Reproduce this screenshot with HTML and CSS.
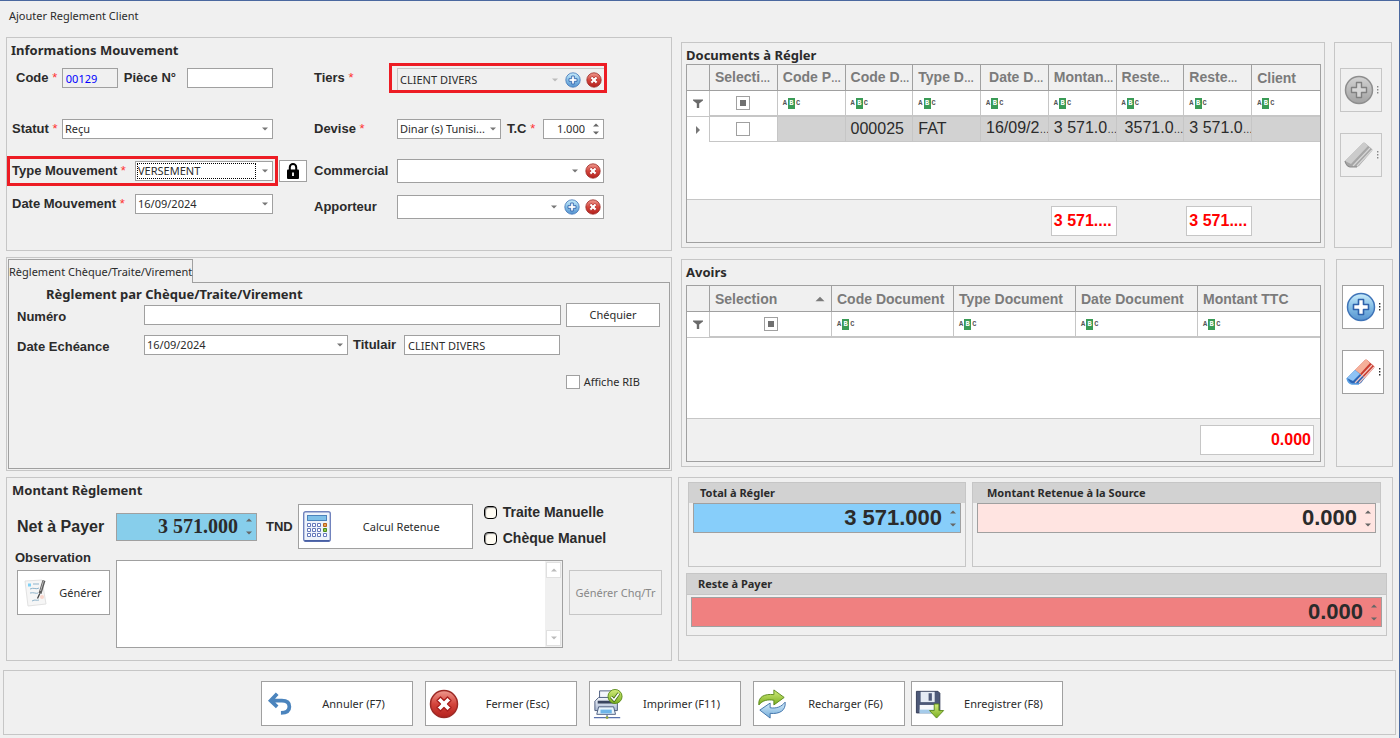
FILE: index.html
```html
<!DOCTYPE html>
<html lang="fr">
<head>
<meta charset="utf-8">
<title>Ajouter Reglement Client</title>
<link rel="stylesheet" href="styles.css">
</head>
<body>
<svg class="defs" aria-hidden="true">
  <defs>
    <linearGradient id="gBlue" x1="0" y1="0" x2="0" y2="1"><stop offset="0" stop-color="#c9ecfb"/><stop offset=".5" stop-color="#86bfe6"/><stop offset="1" stop-color="#5592cf"/></linearGradient>
    <linearGradient id="gRed" x1="0" y1="0" x2="0" y2="1"><stop offset="0" stop-color="#ef9a90"/><stop offset=".5" stop-color="#d4453c"/><stop offset="1" stop-color="#b3201c"/></linearGradient>
    <linearGradient id="gGrey" x1="0" y1="0" x2="0" y2="1"><stop offset="0" stop-color="#d2d2d2"/><stop offset="1" stop-color="#a2a2a2"/></linearGradient>
    <linearGradient id="gGreen" x1="0" y1="0" x2="0" y2="1"><stop offset="0" stop-color="#d3ec7c"/><stop offset="1" stop-color="#79ae1f"/></linearGradient>
    <linearGradient id="gSky" x1="0" y1="0" x2="0" y2="1"><stop offset="0" stop-color="#d6edfb"/><stop offset="1" stop-color="#74acd9"/></linearGradient>
    <linearGradient id="gSteel" x1="0" y1="0" x2="0" y2="1"><stop offset="0" stop-color="#f4f7fc"/><stop offset="1" stop-color="#a9b8d2"/></linearGradient>
    <symbol id="plus" viewBox="0 0 30 30"><circle cx="15" cy="15" r="13.5" fill="url(#gBlue)" stroke="#3f74b8" stroke-width="1.5"/><path d="M12.5 7.500h5v5h5v5h-5v5h-5v-5h-5v-5h5z" fill="#fff" stroke="#2f62ab" stroke-width="1.600" stroke-linejoin="round"/></symbol>
    <symbol id="plusGrey" viewBox="0 0 30 30"><circle cx="15" cy="15" r="13.500" fill="url(#gGrey)" stroke="#8e8e8e" stroke-width="1.500"/><path d="M12.500 7.500h5v5h5v5h-5v5h-5v-5h-5v-5h5z" fill="#d6d6d6" stroke="#808080" stroke-width="1.400" stroke-linejoin="round"/></symbol>
    <symbol id="cross" viewBox="0 0 30 30"><circle cx="15" cy="15" r="13.500" fill="url(#gRed)" stroke="#9c2a26" stroke-width="1.500"/><path d="M11.500 8l3.500 3.500L18.500 8l3.500 3.500-3.500 3.500 3.500 3.500-3.500 3.500-3.500-3.500-3.500 3.500L8 18.500l3.500-3.500L8 11.500z" fill="#fff" stroke="#a81d1b" stroke-width="1.300" stroke-linejoin="round"/></symbol>
    <symbol id="down" viewBox="0 0 6 4"><path d="M0 .5h6L3 3.500z" fill="currentColor"/></symbol>
    <symbol id="up" viewBox="0 0 6 4"><path d="M0 3.500h6L3 .5z" fill="currentColor"/></symbol>
    <symbol id="funnel" viewBox="0 0 10 9"><path d="M0 .5h10v1L6.200 4.500V9H3.800V4.500L0 1.500z" fill="#6a6a6a"/></symbol>
    <symbol id="dots" viewBox="0 0 2 8"><path d="M0 0h1.400v1.400H0zM0 3h1.400v1.400H0zM0 6h1.400v1.400H0z" fill="currentColor"/></symbol>
  </defs>
</svg>

<div class="window">
  <header class="caption">Ajouter Reglement Client</header>

  <form class="workspace">
    <div class="side-left">

      <section class="panel movement">
        <h2>Informations Mouvement</h2>
        <div class="movement-cols">
          <div class="rows rows-a">
            <div class="row inset">
              <label class="grow code-label" for="code">Code <b>*</b></label>
              <input class="box code" id="code" value="00129" readonly>
              <label class="piece-label" for="piece">Pièce N°</label>
              <input class="box piece" id="piece">
            </div>
            <div class="row inset">
              <label class="grow" for="statut">Statut <b>*</b></label>
              <span class="box combo w-long"><span class="pick"><select id="statut"><option>Reçu</option></select><svg><use href="#down"/></svg></span></span>
            </div>
            <div class="row">
              <div class="marked type-mark">
                <label class="grow" for="type">Type Mouvement <b>*</b></label>
                <span class="box combo w-mid"><span class="pick focused"><select id="type"><option>VERSEMENT</option></select><svg><use href="#down"/></svg></span></span>
              </div>
              <button type="button" class="btn lock" aria-label="Verrouiller"><svg viewBox="0 0 12 16"><path d="M2.800 7V4.200a3.200 3.200 0 0 1 6.400 0V7" fill="none" stroke="#000" stroke-width="2"/><rect y="6.500" width="12" height="9.500" rx="1" fill="#000"/><path d="M6 9.500v3.500" stroke="#fff" stroke-width="1.800"/></svg></button>
            </div>
            <div class="row inset">
              <label class="grow" for="date">Date Mouvement <b>*</b></label>
              <span class="box combo w-mid"><span class="pick"><select id="date"><option>16/09/2024</option></select><svg><use href="#down"/></svg></span></span>
            </div>
          </div>

          <div class="rows rows-b">
            <div class="row">
              <label class="name" for="tiers">Tiers <b>*</b></label>
              <div class="marked tiers-mark">
                <span class="box combo off"><span class="pick"><select id="tiers"><option>CLIENT DIVERS</option></select><svg><use href="#down"/></svg></span><button type="button" class="mini" aria-label="Ajouter un tiers"><svg><use href="#plus"/></svg></button><button type="button" class="mini" aria-label="Effacer le tiers"><svg><use href="#cross"/></svg></button></span>
              </div>
            </div>
            <div class="row">
              <label class="name" for="devise">Devise <b>*</b></label>
              <span class="box combo devise"><span class="pick"><select id="devise"><option>Dinar (s) Tunisi...</option></select><svg><use href="#down"/></svg></span></span>
              <label class="tc" for="tc">T.C <b>*</b></label>
              <span class="box spin rate"><input id="tc" value="1.000"><span class="arrows"><svg><use href="#up"/></svg><svg><use href="#down"/></svg></span></span>
            </div>
            <div class="row">
              <label class="name" for="commercial">Commercial</label>
              <span class="box combo tall"><span class="pick"><select id="commercial"><option></option></select><svg><use href="#down"/></svg></span><button type="button" class="mini" aria-label="Effacer le commercial"><svg><use href="#cross"/></svg></button></span>
            </div>
            <div class="row">
              <label class="name" for="apporteur">Apporteur</label>
              <span class="box combo tall"><span class="pick"><select id="apporteur"><option></option></select><svg><use href="#down"/></svg></span><button type="button" class="mini" aria-label="Ajouter un apporteur"><svg><use href="#plus"/></svg></button><button type="button" class="mini" aria-label="Effacer l'apporteur"><svg><use href="#cross"/></svg></button></span>
            </div>
          </div>
        </div>
      </section>

      <section class="panel cheque">
        <button type="button" class="tab">Règlement Chèque/Traite/Virement</button>
        <div class="tab-page">
          <h2>Règlement par Chèque/Traite/Virement</h2>
          <div class="row">
            <label class="cheque-name" for="numero">Numéro</label>
            <input class="box grow" id="numero">
            <button type="button" class="btn chequier">Chéquier</button>
          </div>
          <div class="row due">
            <label class="cheque-name" for="echeance">Date Echéance</label>
            <span class="box combo grow"><span class="pick"><select id="echeance"><option>16/09/2024</option></select><svg><use href="#down"/></svg></span></span>
            <label class="titulair" for="titulair">Titulair</label>
            <input class="box holder" id="titulair" value="CLIENT DIVERS">
          </div>
          <div class="rib"><input type="checkbox" class="tick" id="rib"><label class="plain" for="rib">Affiche RIB</label></div>
        </div>
      </section>

      <section class="panel amount">
        <h2>Montant Règlement</h2>
        <div class="net-row">
          <label class="net" for="net">Net à Payer</label>
          <span class="box spin net-box"><input id="net" value="3 571.000"><span class="arrows"><svg><use href="#up"/></svg><svg><use href="#down"/></svg></span></span>
          <span class="currency">TND</span>
          <button type="button" class="btn calc">
            <svg viewBox="0 0 28 31"><rect x=".7" y=".7" width="26.600" height="29.600" rx="2" fill="#eef3fb" stroke="#7183bd" stroke-width="1.400"/><path d="M1.500 29.800h25" stroke="#3d559c" stroke-width="1.400"/><rect x="4.500" y="4.500" width="19" height="5" fill="#7fc0e8" stroke="#4c82bb"/><g fill="#fff" stroke="#6478bb"><path d="M4.500 12.500h3v3h-3zM9.500 12.500h3v3h-3zM14.500 12.500h3v3h-3zM4.500 17.500h3v3h-3zM9.500 17.500h3v3h-3zM14.500 17.500h3v3h-3zM4.500 22.500h3v3h-3zM9.500 22.500h3v3h-3zM14.500 22.500h3v3h-3zM20.500 22.500h3v3h-3z"/></g><path d="M20.500 12.500h3v3h-3z" fill="#e8a04c" stroke="#b9621b"/><path d="M20.500 17.500h3v3h-3z" fill="#8cc63f" stroke="#4c8a1c"/></svg>
            <span>Calcul Retenue</span>
          </button>
          <div class="manual">
            <span><input type="checkbox" class="round" id="mt"><label for="mt">Traite Manuelle</label></span>
            <span><input type="checkbox" class="round" id="mc"><label for="mc">Chèque Manuel</label></span>
          </div>
        </div>
        <div class="note-row">
          <div class="note-left">
            <label for="obs">Observation</label>
            <button type="button" class="btn generate">
              <svg viewBox="0 0 26 30"><path d="M1 3l17-1 4 24-18 2z" fill="#f6f6f6" stroke="#e2e2e2"/><path d="M4 5.500h3v3H4z" fill="#7fd0f5"/><path d="M9 6l6 0M6 11c4-2 6 1 9-1M6 15c4-1 6 1 8 0M8 23c3-2 5 0 7-1" fill="none" stroke="#8fb4cb"/><circle cx="18" cy="19" r="2" fill="#f9d5cb"/><path d="M20 2.500l-4 13" stroke="#5b5b5b" stroke-width="3"/><path d="M15.800 15.500l-2.300 5" stroke="#444" stroke-width="1.300"/><path d="M19.500 3l-3 10" stroke="#bbb"/></svg>
              <span>Générer</span>
            </button>
          </div>
          <div class="box note"><textarea id="obs"></textarea><span class="track"><button type="button" aria-label="Haut"><svg><use href="#up"/></svg></button><button type="button" aria-label="Bas"><svg><use href="#down"/></svg></button></span></div>
          <button type="button" class="btn gen-chq" disabled>Générer Chq/Tr</button>
        </div>
      </section>
    </div>

    <div class="side-right">
      <div class="grid-row docs-row">
        <section class="panel data">
          <h2>Documents à Régler</h2>
          <table class="sheet docs">
            <colgroup><col class="mark"><col><col><col><col><col><col><col><col><col></colgroup>
            <thead>
              <tr><th></th><th>Selecti<i>…</i></th><th>Code P<i>…</i></th><th>Code D<i>…</i></th><th>Type D<i>…</i></th><th class="pad">Date D<i>…</i></th><th>Montan<i>…</i></th><th>Reste<i>…</i></th><th>Reste<i>…</i></th><th>Client</th></tr>
              <tr class="filter"><td><svg class="funnel"><use href="#funnel"/></svg></td><td class="mid"><input type="checkbox" class="tick some" aria-label="Filtre sélection"></td><td><span class="abc">A<em>B</em>C</span></td><td><span class="abc">A<em>B</em>C</span></td><td><span class="abc">A<em>B</em>C</span></td><td><span class="abc">A<em>B</em>C</span></td><td><span class="abc">A<em>B</em>C</span></td><td><span class="abc">A<em>B</em>C</span></td><td><span class="abc">A<em>B</em>C</span></td><td><span class="abc">A<em>B</em>C</span></td></tr>
            </thead>
            <tbody>
              <tr class="record"><td class="pointer"><svg viewBox="0 0 4 8"><path d="M0 0l4 4-4 4z" fill="#777"/></svg></td><td class="mid select"><input type="checkbox" class="tick" aria-label="Sélectionner 000025"></td><td></td><td>000025</td><td>FAT</td><td>16/09/2<i>…</i></td><td>3 571.0<i>…</i></td><td class="pad">3571.0<i>…</i></td><td>3 571.0<i>…</i></td><td></td></tr>
              <tr class="blank"><td colspan="10"></td></tr>
            </tbody>
            <tfoot><tr><td colspan="6"></td><td><output class="sum">3 571....</output></td><td></td><td><output class="sum">3 571....</output></td><td></td></tr></tfoot>
          </table>
        </section>
        <aside class="panel tools">
          <button type="button" class="btn tool" disabled aria-label="Ajouter un document"><svg class="pic"><use href="#plusGrey"/></svg><svg class="dots"><use href="#dots"/></svg></button>
          <button type="button" class="btn tool" disabled aria-label="Effacer les documents"><svg class="pic" viewBox="0 0 30 30"><path d="M1 21L19 3q1-1 2 0l7 6q1 1 0 2L15 26l-2 1H6q-4-1-5-6z" fill="#a6a6a6"/><path d="M1 21L19 3q1-1 2 0l3 3L7 24z" fill="#cbcbcb"/><path d="M9 26L26 8M13 26L28 10" stroke="#d6d6d6" stroke-width="1.200"/><path d="M1 21q1 5 5 6h7" fill="none" stroke="#8b8b8b" stroke-width="1.200"/></svg><svg class="dots"><use href="#dots"/></svg></button>
        </aside>
      </div>

      <div class="grid-row credits-row">
        <section class="panel data">
          <h2>Avoirs</h2>
          <table class="sheet credits">
            <colgroup><col class="mark"><col><col><col><col><col></colgroup>
            <thead>
              <tr><th></th><th><span class="sorted">Selection<svg><use href="#up"/></svg></span></th><th>Code Document</th><th>Type Document</th><th>Date Document</th><th>Montant TTC</th></tr>
              <tr class="filter"><td><svg class="funnel"><use href="#funnel"/></svg></td><td class="mid"><input type="checkbox" class="tick some" aria-label="Filtre sélection"></td><td><span class="abc">A<em>B</em>C</span></td><td><span class="abc">A<em>B</em>C</span></td><td><span class="abc">A<em>B</em>C</span></td><td><span class="abc">A<em>B</em>C</span></td></tr>
            </thead>
            <tbody><tr class="blank"><td colspan="6"></td></tr></tbody>
            <tfoot><tr><td colspan="5"></td><td><output class="sum">0.000</output></td></tr></tfoot>
          </table>
        </section>
        <aside class="panel tools">
          <button type="button" class="btn tool" aria-label="Ajouter un avoir"><svg class="pic"><use href="#plus"/></svg><svg class="dots"><use href="#dots"/></svg></button>
          <button type="button" class="btn tool" aria-label="Effacer les avoirs"><svg class="pic" viewBox="0 0 30 30"><path d="M9 13L19 3q1-1 2 0l7 6q1 1 0 2l-9 10z" fill="#c93c2f"/><path d="M9 13L19 3q1-1 2 0l3 3-10 11z" fill="#f5b09a"/><path d="M1 21l8-8 10 8-4 5-2 1H6q-4-1-5-6z" fill="#2b65b5"/><path d="M1 21l8-8 5 4-7 7z" fill="#8ec3f5"/><path d="M9 26L26 8M13 26L28 10" stroke="#f3c9c4" stroke-width="1.200"/><path d="M1 21q1 5 5 6h7" fill="none" stroke="#5ba0e4" stroke-width="1.500"/></svg><svg class="dots"><use href="#dots"/></svg></button>
        </aside>
      </div>

      <section class="panel totals">
        <div class="pair">
          <div class="card due-total"><label for="total">Total à Régler</label><span class="box spin big blue"><input id="total" value="3 571.000"><span class="arrows"><svg><use href="#up"/></svg><svg><use href="#down"/></svg></span></span></div>
          <div class="card held"><label for="retenue">Montant Retenue à la Source</label><span class="box spin big pink"><input id="retenue" value="0.000"><span class="arrows"><svg><use href="#up"/></svg><svg><use href="#down"/></svg></span></span></div>
        </div>
        <div class="card rest"><label for="reste">Reste à Payer</label><span class="box spin big coral"><input id="reste" value="0.000"><span class="arrows"><svg><use href="#up"/></svg><svg><use href="#down"/></svg></span></span></div>
      </section>
    </div>
  </form>

  <footer class="panel actions">
    <button type="button" class="btn action"><svg viewBox="0 0 32 32"><path d="M13 5L6 12.500l7 6.500M6.500 12.500H18c7 0 8 4 8 6.500 0 4-3 6.500-9 6.500" fill="none" stroke="#4b84bd" stroke-width="4"/></svg><span>Annuler (F7)</span></button>
    <button type="button" class="btn action"><svg viewBox="0 0 30 30"><use href="#cross"/></svg><span>Fermer (Esc)</span></button>
    <button type="button" class="btn action"><svg viewBox="0 0 32 32"><path d="M7 2h13v11H7z" fill="#f3f6fb" stroke="#4a5a7c"/><path d="M3 12l3-3h17l3 3v11H2V13z" fill="url(#gSteel)" stroke="#4a5a7c"/><path d="M5 12.500h19v3H5z" fill="#39445e"/><path d="M6 19h16l2 8H4z" fill="#e8f4fc" stroke="#4a5a7c"/><path d="M8 22h12v4H8z" fill="#6db5e8"/><path d="M1 30.500h28M15 27v4" stroke="#5972ad" stroke-width="1.300"/><circle cx="15" cy="30.500" r="1.500" fill="#94a63c"/><circle cx="23.500" cy="8" r="7.500" fill="url(#gGreen)" stroke="#5c8d1b"/><path d="M19.500 8.500l3 3.200 5-7" fill="none" stroke="#3b6413" stroke-width="3.400"/><path d="M19.500 8.500l3 3.200 5-7" fill="none" stroke="#fff" stroke-width="1.800"/></svg><span>Imprimer (F11)</span></button>
    <button type="button" class="btn action"><svg viewBox="0 0 32 32"><path d="M2 17C1 8 8 5 18 6V1l11 8-11 8v-5C11 11 6 12 2 17z" fill="url(#gGreen)" stroke="#5b8a1c"/><path d="M30 14c1 9-6 13-16 12v5L3 22.500 14 15v5c7 1 12-1 16-6z" fill="url(#gSky)" stroke="#3f72aa"/></svg><span>Recharger (F6)</span></button>
    <button type="button" class="btn action"><svg viewBox="0 0 32 32"><path d="M1.500 2.500h23l2 2v21h-25z" fill="#4d5978" stroke="#333c56"/><path d="M6 3h15v11H6z" fill="#e5ebf4"/><path d="M14.500 4.500h3.500v8h-3.500z" fill="#4d5978"/><path d="M5 17h18v9H5z" fill="#f7f9fc"/><path d="M5 22h18v4H5z" fill="#a5cbea"/><path d="M20.500 16h5v7h5L23 31l-7.500-8h5z" fill="url(#gGreen)" stroke="#5b8a1c"/></svg><span>Enregistrer (F8)</span></button>
  </footer>
</div>
</body>
</html>
```

FILE: styles.css
```css
* { box-sizing: border-box; }
body {
  margin: 0;
  background: #f0f0f0;
  color: #2b2b2b;
  font: 11px/16px "Noto Sans", "Open Sans", sans-serif;
}
.defs { position: absolute; width: 0; height: 0; }
.window {
  min-height: 100vh;
  padding: 0 3px 3px 3px;
  border-top: 1px solid #4a689f;
  border-right: 1px solid #4a689f;
}
.caption { height: 36px; padding: 7px 6px; font-size: 11px; }
button, input, select, textarea { font: inherit; color: inherit; margin: 0; }
h2 { margin: 0; font: bold 13px/18px "Noto Sans", sans-serif; }
label, .currency { font: bold 13px/18px "Liberation Sans", Arial, sans-serif; white-space: nowrap; }
label b { color: #f33; font-weight: normal; }
.plain { font: 11px/16px "Noto Sans", sans-serif; }
.grow { flex: 1; min-width: 0; }

.workspace {
  display: grid;
  grid-template-columns: 666fr 715fr;
  gap: 6px;
  padding: 0 3px;
}
.side-left { display: flex; flex-direction: column; gap: 6px; }
.side-right { display: flex; flex-direction: column; padding-top: 5px; }
.panel { border: 1px solid #c6c6c6; }

/* shared controls */
.box { height: 20px; border: 1px solid #a0a0a0; border-radius: 0; background: #fff; padding: 0 3px; }
.row { display: flex; align-items: center; }
.combo { display: flex; align-items: center; padding: 0; }
.pick { position: relative; display: flex; flex: 1; height: 100%; min-width: 0; }
.pick select {
  flex: 1; min-width: 0; height: 100%; padding: 0 14px 0 2px;
  appearance: none; border: 0; border-radius: 0; background: transparent; outline: 0;
}
.pick svg { position: absolute; right: 4px; top: calc(50% - 2px); width: 6px; height: 4px; color: #777; pointer-events: none; }
.focused::before { content: ""; position: absolute; inset: 1px 16px 1px 1px; border: 1px dotted #000; }
.mini { width: 16px; height: 16px; margin: 0 2px 0 3px; padding: 0; border: 0; background: none; }
.mini svg { display: block; width: 16px; height: 16px; }
.spin { display: flex; align-items: center; padding: 0 4px; }
.spin input { flex: 1; min-width: 0; height: 100%; padding: 0 8px 0 0; border: 0; background: transparent; text-align: right; outline: 0; }
.arrows { display: flex; flex-direction: column; gap: 4px; color: #666; }
.arrows svg { width: 6px; height: 4px; }
.btn {
  display: flex; align-items: center; justify-content: center;
  padding: 0; border: 1px solid #a0a0a0; border-radius: 0; background: #fff;
}
.btn:disabled { border-color: #c6c6c6; background: #f0f0f0; color: #888; }
.tick {
  appearance: none; flex: none; width: 14px; height: 14px;
  border: 1px solid #a0a0a0; background: #fff; vertical-align: middle;
}
.some { padding: 3px; background: #707070 content-box; box-shadow: inset 0 0 0 3px #fff; }
.marked { display: flex; flex: none; align-items: center; height: 30px; border: 3px solid #ed1c24; }

/* movement details */
.movement { min-height: 214px; padding: 3px 0 0; }
.movement h2 { padding-left: 4px; }
.movement-cols { display: flex; gap: 7px; }
.rows { display: grid; grid-template-rows: 40px 61px 24px 42px; margin-top: -1px; }
.rows-a { width: 300px; }
.inset { padding: 0 34px 0 5px; }
.code-label { padding-left: 4px; }
.code { width: 56px; background: #f0f0f0; color: #00f; }
.piece-label { padding: 0 11px 0 6px; }
.piece { width: 86px; }
.w-long { width: 211px; }
.w-mid { width: 138px; }
.type-mark { width: 271px; padding: 0 2px; }
.lock { width: 28px; height: 22px; margin-left: 1px; }
.lock svg { width: 12px; height: 16px; }
.name { width: 83px; flex: none; }
.rows-b { grid-template-rows: 40px 61px 24px 48px; }
.rows-b .combo { width: 207px; }
.rows-b .tall { height: 24px; }
.rows-b .devise { width: 104px; }
.tc { width: 42px; padding-left: 6px; }
.rate { width: 61px; }
.tiers-mark { width: 218px; margin-left: -8px; padding: 2px 0 0 5px; align-items: stretch; }
.tiers-mark .combo { height: 100%; background: #f0f0f0; border-color: #c6c6c6; border-width: 1px 0 0 1px; }
.off .pick svg { color: #bbb; }

/* cheque tab */
.cheque { display: flex; flex-direction: column; min-height: 214px; padding: 1px; }
.tab {
  position: relative; align-self: flex-start; width: 185px; height: 24px; margin-bottom: -1px; padding: 0;
  border: 1px solid #a0a0a0; border-bottom: 0; background: #f0f0f0; white-space: nowrap;
}
.tab-page { flex: 1; padding: 2px 9px 0 8px; border: 1px solid #a0a0a0; }
.tab-page h2 { padding-left: 29px; }
.cheque-name { width: 127px; flex: none; padding-top: 4px; }
.chequier { width: 94px; height: 24px; margin-left: 5px; }
.due { margin-top: 7px; padding-right: 100px; }
.titulair { width: 56px; padding-left: 5px; }
.holder { width: 156px; }
.rib { display: flex; align-items: center; justify-content: flex-end; gap: 4px; margin-top: 18px; padding-right: 20px; }

/* amount */
.amount { min-height: 184px; padding: 3px 9px 0 5px; }
.net-row { display: flex; align-items: center; margin-top: 4px; padding-left: 5px; }
.net { width: 99px; font-size: 16px; }
.net-box { width: 141px; height: 28px; background: #87ceeb; }
.net-box input { font: bold 20px/26px "Liberation Serif", "Times New Roman", serif; }
.net-box .arrows, .big .arrows { gap: 9px; }
.currency { padding: 0 5px 0 9px; }
.calc { width: 175px; height: 45px; padding-left: 4px; }
.calc svg { width: 28px; height: 31px; }
.calc span { flex: 1; }
.manual { display: flex; flex-direction: column; gap: 8px; margin-left: 11px; padding-bottom: 3px; }
.manual span { display: flex; align-items: center; gap: 6px; }
.manual label { font-size: 14px; }
.round {
  appearance: none; width: 13px; height: 13px; border: 1px solid #000; border-radius: 4px;
  background: #fffcf3; box-shadow: inset 1px 1px 1px #888;
}
.note-row { display: flex; align-items: flex-start; margin-top: 10px; }
.note-left { width: 104px; margin-top: -11px; padding-left: 3px; }
.generate { width: 93px; height: 45px; margin: 3px 0 0 2px; padding-left: 6px; }
.generate svg { width: 26px; height: 30px; }
.generate span { flex: 1; padding-left: 2px; }
.note { display: flex; flex: 1; height: 88px; padding: 0; }
.note textarea { flex: 1; min-width: 0; border: 0; resize: none; outline: 0; }
.track { display: flex; flex-direction: column; justify-content: space-between; width: 17px; padding: 1px; background: #f0f0f0; }
.track button { display: flex; align-items: center; justify-content: center; width: 15px; height: 16px; padding: 0; border: 1px solid #e0e0e0; background: #fff; color: #bbb; }
.track svg { width: 6px; height: 4px; }
.gen-chq { width: 93px; height: 45px; margin: 10px 0 0 6px; }

/* data grids */
.grid-row { display: flex; gap: 9px; padding-left: 3px; }
.docs-row { padding-right: 1px; }
.credits-row { gap: 11px; margin-top: 11px; }
.data { flex: 1; min-width: 0; padding: 3px 3px 4px 4px; }
.docs-row .data h2 { height: 18px; }
.credits-row .data h2 { height: 22px; }
.sheet {
  width: 100%; table-layout: fixed; border-collapse: separate; border-spacing: 0;
  border: 1px solid #a0a0a0; background: #fff;
  font: 16px/20px "Liberation Sans", Arial, sans-serif;
}
.sheet th, .sheet td { padding: 0 0 0 5px; text-align: left; white-space: nowrap; overflow: hidden; border-right: 1px solid #c6c6c6; }
.sheet tr > :last-child { border-right: 0; }
.sheet th { height: 26px; border-right-color: #a0a0a0; border-bottom: 1px solid #a0a0a0; background: #f0f0f0; color: #7b7b7b; font-size: 14px; }
.sheet i { font-size: 10px; font-style: normal; }
.sheet .pad { padding-left: 8px; }
.mark { width: 23px; }
.filter td { height: 26px; border-bottom: 2px solid #c6c6c6; line-height: 0; }
.filter td:first-child { padding-left: 6px; border-bottom-width: 1px; }
.funnel { width: 10px; height: 9px; }
.sheet .mid { padding: 0; text-align: center; line-height: 0; }
.abc { display: inline-flex; align-items: center; gap: 1px; font: bold 7px/11px "Liberation Mono", monospace; color: #555; }
.abc em { width: 7px; background: #3a9b56; color: #fff; font-style: normal; text-align: center; }
.record td { height: 25px; background: #d2d2d2; border-bottom: 1px solid #c6c6c6; }
.record .pointer { padding-left: 9px; background: #fff; border-bottom: 0; line-height: 0; }
.pointer svg { width: 4px; height: 8px; }
.record .select { background: #fff; }
.blank td { height: 57px; border: 0; }
.credits .blank td { height: 80px; }
.sheet tfoot td { height: 43px; padding: 0 0 0 2px; border-top: 1px solid #c6c6c6; border-right: 0; background: #f0f0f0; line-height: 0; }
.sum {
  display: block; width: 66px; height: 30px; padding: 0 2px; overflow: hidden;
  border: 1px solid #c6c6c6; background: #fff; color: #f00;
  font: bold 16px/28px "Liberation Sans", Arial, sans-serif;
}
.credits .sum { width: auto; margin-right: 6px; text-align: right; }
.sorted { display: flex; align-items: center; justify-content: space-between; padding-right: 6px; }
.sorted svg { width: 10px; height: 6px; }
.tools { display: flex; flex-direction: column; gap: 21px; width: 58px; padding: 25px 5px; }
.credits-row .tools { width: 57px; }
.tool { width: 42px; height: 44px; justify-content: space-between; padding: 0 2px 0 3px; }
.pic { width: 30px; height: 30px; }
.dots { width: 2px; height: 8px; }

/* totals */
.totals { flex: 1; margin-top: 10px; padding: 4px 5px 0 7px; }
.pair { display: grid; grid-template-columns: minmax(0, 278fr) minmax(0, 409fr); gap: 6px; padding: 0 6px 0 2px; }
.card { border: 1px solid #c6c6c6; }
.card label { display: block; height: 20px; padding-left: 11px; background: #d2d2d2; font: bold 11px/20px "Noto Sans", sans-serif; }
.pair .card { height: 85px; }
.held label { padding-left: 14px; }
.rest { margin-top: 6px; height: 63px; }
.rest label { height: 21px; border-bottom: 1px solid #c6c6c6; }
.big { height: 30px; margin: 0 4px; }
.rest .big { margin-top: 2px; }
.big input { font: bold 22px/28px "Liberation Sans", Arial, sans-serif; }
.blue { background: #87cefa; }
.pink { background: #ffe4e1; }
.coral { background: #f08080; }

/* bottom buttons */
.actions { display: flex; flex-wrap: wrap; gap: 12px; margin-top: 9px; padding: 10px 0 8px 257px; }
.action { width: 152px; height: 45px; padding-left: 3px; }
.action svg { width: 30px; height: 30px; }
.action span { flex: 1; }
.action:last-child { margin-left: -6px; }
```
